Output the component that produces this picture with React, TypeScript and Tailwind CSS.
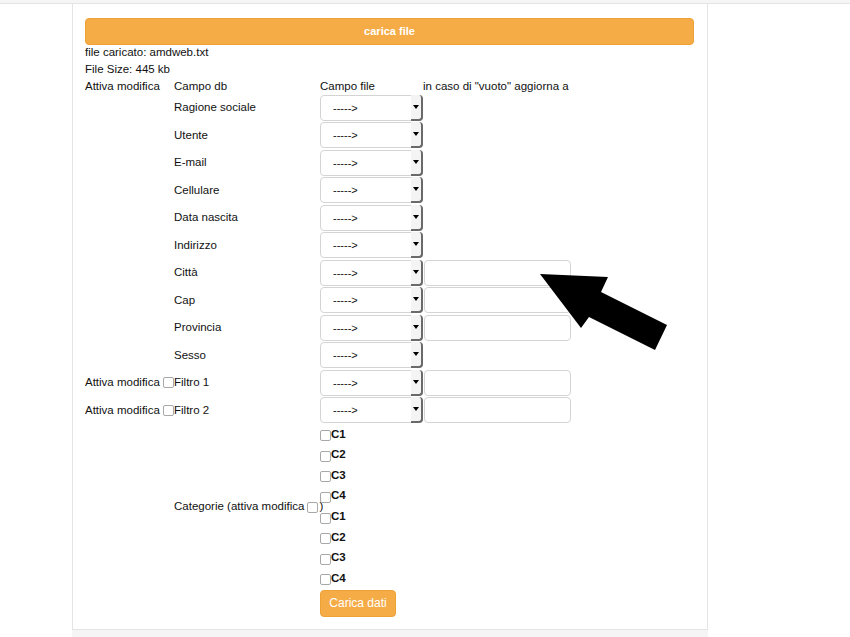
import React from "react";

const fieldRows: { label: string; check?: boolean; extra?: boolean }[] = [
  { label: "Ragione sociale" },
  { label: "Utente" },
  { label: "E-mail" },
  { label: "Cellulare" },
  { label: "Data nascita" },
  { label: "Indirizzo" },
  { label: "Città", extra: true },
  { label: "Cap", extra: true },
  { label: "Provincia", extra: true },
  { label: "Sesso" },
  { label: "Filtro 1", check: true, extra: true },
  { label: "Filtro 2", check: true, extra: true },
];

const cats = ["C1", "C2", "C3", "C4", "C1", "C2", "C3", "C4"];

function Box() {
  return (
    <span className="inline-block w-[11px] h-[11px] border border-[#a8a8a8] rounded-[2px] bg-white shrink-0" />
  );
}

function FakeSelect() {
  return (
    <div className="flex w-[103px] h-[26px] border border-[#d4d4d4] rounded-[4px] bg-white">
      <div className="flex-1 flex items-center pl-[12px] text-[11px]">-----&gt;</div>
      <div className="w-[12px] -my-px -mr-px flex items-center justify-center bg-[#f4f4f4] border-r-2 border-b-2 border-[#6a6a6a] rounded-r-[4px]">
        <span className="block w-0 h-0 border-x-[3px] border-x-transparent border-t-[4px] border-t-black" />
      </div>
    </div>
  );
}

export default function App() {
  return (
    <div
      className="relative w-[850px] h-[637px] bg-white overflow-hidden text-[11.5px] text-[#111] whitespace-nowrap"
      style={{ fontFamily: '"Liberation Sans", Arial, sans-serif' }}
    >
      <div className="h-[4px] bg-[#f5f5f5] border-b border-[#e4e4e4]" />
      <div className="ml-[72px] w-[636px] h-[626px] border-x border-[#e4e4e4] px-[12px] pt-[14px]">
        <div className="w-[609px] h-[27px] bg-[#f5ab46] border border-[#eea236] rounded-[4px] flex items-center justify-center text-white font-bold text-[11px]">
          carica file
        </div>
        <div className="leading-[17px] -mt-[1px]">
          <div>file caricato: amdweb.txt</div>
          <div>File Size: 445 kb</div>
          <div className="flex">
            <div className="w-[89px]">Attiva modifica</div>
            <div className="w-[146px]">Campo db</div>
            <div className="w-[103px]">Campo file</div>
            <div>in caso di "vuoto" aggiorna a</div>
          </div>
        </div>
        <div className="-mt-[1px]">
          {fieldRows.map((r, i) => (
            <div key={i} className="flex items-center h-[27.5px]">
              <div className="w-[89px] flex items-center">
                {r.check && (
                  <>
                    <span>Attiva modifica</span>
                    <span className="ml-[3px] flex">
                      <Box />
                    </span>
                  </>
                )}
              </div>
              <div className="w-[146px]">{r.label}</div>
              <FakeSelect />
              {r.extra && (
                <div className="w-[147px] h-[26px] ml-[1px] border border-[#d4d4d4] rounded-[4px] bg-white" />
              )}
            </div>
          ))}
        </div>
        <div className="flex items-center">
          <div className="w-[89px]" />
          <div className="w-[146px] flex items-center">
            Categorie (attiva modifica
            <span className="ml-[3px] mr-[1px] mt-[2px] flex">
              <Box />
            </span>
            )
          </div>
          <div>
            {cats.map((c, i) => (
              <div key={i} className="flex items-center h-[20.6px] font-bold">
                <span className="mt-[3px] flex">
                  <Box />
                </span>
                <span>{c}</span>
              </div>
            ))}
          </div>
        </div>
        <div className="pl-[235px] mt-[1px]">
          <div className="w-[76px] h-[27px] bg-[#f5ab46] border border-[#eea236] rounded-[4px] flex items-center justify-center text-white text-[12px]">
            Carica dati
          </div>
        </div>
      </div>
      <div className="absolute left-[72px] top-[629px] w-[636px] h-[8px] bg-[#f5f5f5] border-t border-[#e4e4e4]" />
      <svg className="absolute left-0 top-0" width="850" height="637" viewBox="0 0 850 637">
        <polygon
          points="540,274 608,277 601,292 667,325 655,350 589,317 581,328"
          fill="#000"
        />
      </svg>
    </div>
  );
}
